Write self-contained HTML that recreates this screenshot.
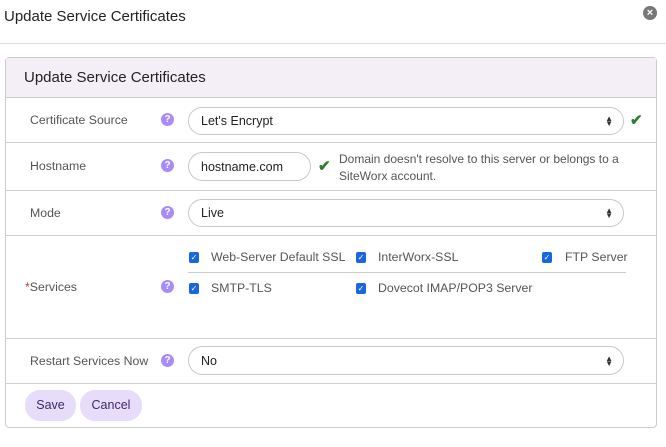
<!DOCTYPE html>
<html><head><style>
*{box-sizing:border-box;margin:0;padding:0}
body{width:666px;height:447px;background:#fff;font-family:"Liberation Sans",sans-serif;position:relative;overflow:hidden;color:#333}
.a{position:absolute}
.t{font-size:12.3px;color:#555}
.q{position:absolute;width:13px;height:13px;border-radius:50%;background:#a78bfa;color:#fff;font-size:10px;font-weight:bold;text-align:center;line-height:13px}
.sel{position:absolute;border:1px solid #c8c8c8;border-radius:15px;background:#fff;font-size:12.5px;color:#222;padding-left:12px}
.arr{position:absolute;right:10px;top:50%;transform:translateY(-50%);font-size:8px;line-height:5px;color:#333}
.hr{position:absolute;left:6px;width:650px;height:1px;background:#d0d0d0}
.cb{position:absolute;width:10px;height:11px;background:#1a66e0;border-radius:2px;color:#fff;font-size:8px;line-height:11px;text-align:center}
.ck{color:#2e7d32;font-size:15px;font-weight:bold}
.btn{position:absolute;top:390px;height:31px;border-radius:15px;background:#e8dcfb;color:#3a2a6a;font-size:12.5px;line-height:31px;text-align:center}
</style></head><body>
<div class="a" style="left:4px;top:8px;font-size:15px;color:#222">Update Service Certificates</div>
<div class="a" style="left:643px;top:6px;width:14px;height:14px;border-radius:50%;background:#777;color:#fff;font-size:11px;line-height:14px;text-align:center;font-weight:bold">×</div>
<div class="a" style="left:0;top:43px;width:666px;height:1px;background:#ddd"></div>
<div class="a" style="left:5px;top:57px;width:652px;height:371px;border:1px solid #ccc;border-radius:4px"></div>
<div class="a" style="left:6px;top:58px;width:650px;height:40px;background:#f4eff6;border-bottom:1px solid #ccc"></div>
<div class="a" style="left:24px;top:69px;font-size:15px;color:#222">Update Service Certificates</div>

<div class="a t" style="left:30px;top:113px">Certificate Source</div>
<div class="q" style="left:161px;top:113px">?</div>
<div class="sel" style="left:188px;top:107px;width:436px;height:28px;line-height:27px">Let's Encrypt<span class="arr">▲<br>▼</span></div>
<div class="a ck" style="left:630px;top:111px">✔</div>
<div class="hr" style="top:142px"></div>

<div class="a t" style="left:30px;top:159px">Hostname</div>
<div class="q" style="left:161px;top:159px">?</div>
<div class="sel" style="left:188px;top:152px;width:123px;height:29px;line-height:28px">hostname.com</div>
<div class="a ck" style="left:318px;top:157px">✔</div>
<div class="a" style="left:339px;top:151px;font-size:12px;color:#555;line-height:17px;width:300px">Domain doesn't resolve to this server or belongs to a SiteWorx account.</div>
<div class="hr" style="top:190px"></div>

<div class="a t" style="left:30px;top:206px">Mode</div>
<div class="q" style="left:161px;top:206px">?</div>
<div class="sel" style="left:188px;top:199px;width:436px;height:28px;line-height:27px">Live<span class="arr">▲<br>▼</span></div>
<div class="hr" style="top:235px"></div>

<div class="a t" style="left:25px;top:280px"><span style="color:#c0392b">*</span>Services</div>
<div class="q" style="left:161px;top:280px">?</div>
<div class="cb" style="left:189px;top:252px">✓</div><div class="a t" style="left:211px;top:250px">Web-Server Default SSL</div>
<div class="cb" style="left:356px;top:252px">✓</div><div class="a t" style="left:378px;top:250px">InterWorx-SSL</div>
<div class="cb" style="left:542px;top:252px">✓</div><div class="a t" style="left:565px;top:250px">FTP Server</div>
<div class="a" style="left:188px;top:272px;width:438px;height:1px;background:#ccc"></div>
<div class="cb" style="left:189px;top:283px">✓</div><div class="a t" style="left:211px;top:281px">SMTP-TLS</div>
<div class="cb" style="left:356px;top:283px">✓</div><div class="a t" style="left:378px;top:281px">Dovecot IMAP/POP3 Server</div>
<div class="hr" style="top:338px"></div>

<div class="a t" style="left:30px;top:354px">Restart Services Now</div>
<div class="q" style="left:161px;top:354px">?</div>
<div class="sel" style="left:188px;top:346px;width:436px;height:29px;line-height:28px">No<span class="arr">▲<br>▼</span></div>
<div class="hr" style="top:383px"></div>

<div class="btn" style="left:25px;width:51px">Save</div>
<div class="btn" style="left:80px;width:62px">Cancel</div>
</body></html>
